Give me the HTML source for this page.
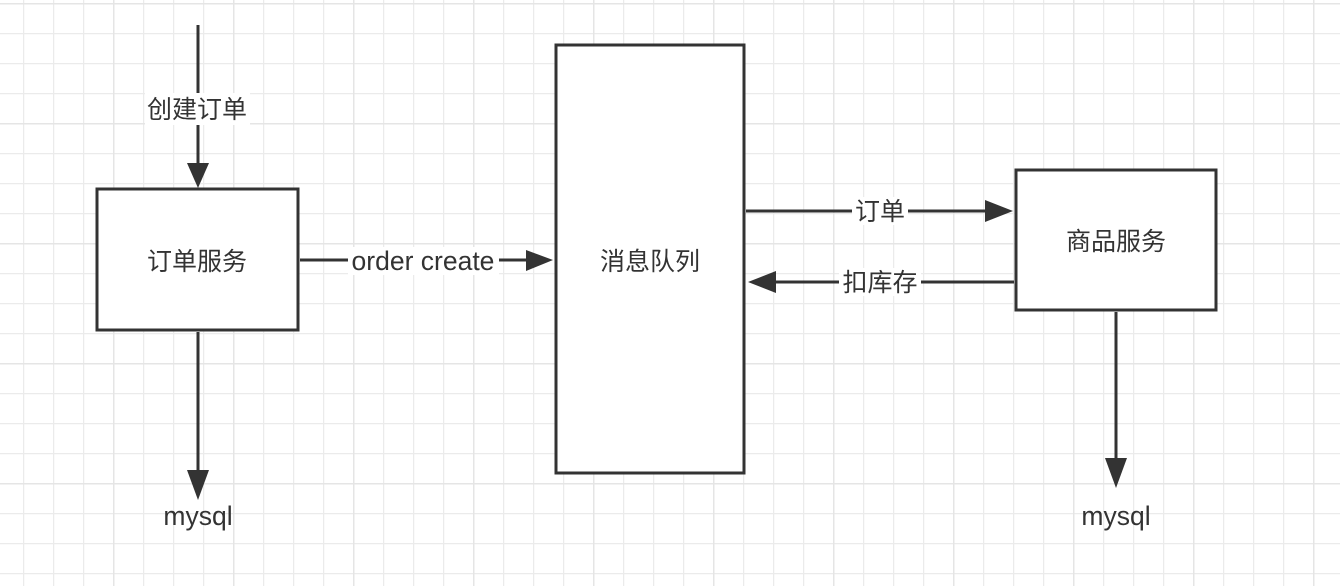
<!DOCTYPE html>
<html><head><meta charset="utf-8"><style>
html,body{margin:0;padding:0;width:1340px;height:586px;overflow:hidden;background:#fff}
svg{display:block}
text{font-family:"Liberation Sans","Noto Sans CJK SC",sans-serif;font-size:25px;fill:#333}
text.l{font-size:26.5px}
</style></head><body>
<svg width="1340" height="586" viewBox="0 0 1340 586">
<defs>
<pattern id="g" x="23" y="3" width="30" height="30" patternUnits="userSpaceOnUse">
<path d="M0.5 0V30M0 0.5H30" stroke="#ebebeb" stroke-width="1.5" fill="none"/>
</pattern>
<pattern id="G" x="113" y="3" width="120" height="120" patternUnits="userSpaceOnUse">
<path d="M0.5 0V120M0 0.5H120" stroke="#e5e5e5" stroke-width="2" fill="none"/>
</pattern>
</defs>
<rect width="1340" height="586" fill="url(#g)"/>
<rect width="1340" height="586" fill="url(#G)"/>
<g stroke="#333" stroke-width="3" fill="none">
<path d="M198 25V165"/>
<rect x="97" y="189" width="201" height="141" fill="#fff"/>
<rect x="556" y="45" width="188" height="428" fill="#fff"/>
<rect x="1016" y="170" width="200" height="140" fill="#fff"/>
<path d="M300 260H528"/>
<path d="M746 211H988"/>
<path d="M1014 282H774"/>
<path d="M198 332V472"/>
<path d="M1116 312V460"/>
</g>
<g fill="#333">
<path d="M187 163H209L198 188Z"/>
<path d="M526 250V271L553 260Z"/>
<path d="M985 200V222L1013 211Z"/>
<path d="M776 271V293L748 282Z"/>
<path d="M187 470H209L198 500Z"/>
<path d="M1105 458H1127L1116 488Z"/>
</g>
<rect x="145" y="93" width="105" height="32" fill="#fff"/>
<text x="197" y="118" text-anchor="middle">创建订单</text>
<text x="197" y="270" text-anchor="middle">订单服务</text>
<rect x="348" y="247" width="151" height="28" fill="#fff"/>
<text class="l" x="423" y="270" text-anchor="middle">order create</text>
<text x="650" y="270" text-anchor="middle">消息队列</text>
<rect x="852" y="197" width="56" height="28" fill="#fff"/>
<text x="880" y="220" text-anchor="middle">订单</text>
<rect x="839" y="268" width="82" height="28" fill="#fff"/>
<text x="880" y="291" text-anchor="middle">扣库存</text>
<text x="1116" y="250" text-anchor="middle">商品服务</text>
<text class="l" x="198" y="525" text-anchor="middle">mysql</text>
<text class="l" x="1116" y="525" text-anchor="middle">mysql</text>
</svg>
</body></html>
